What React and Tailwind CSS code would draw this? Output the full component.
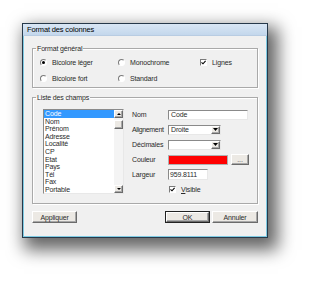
import React from "react";

const raised =
  "bg-[#ece9e4] border border-t-white border-l-white border-r-[#6b6b6b] border-b-[#6b6b6b] shadow-[inset_-1px_-1px_0_#a8a8a8]";
const sunken =
  "bg-white border border-t-[#8a8a8a] border-l-[#8a8a8a] border-r-[#e8e8e8] border-b-[#e8e8e8]";

function Radio({ checked, label }) {
  return (
    <div className="flex items-center h-[8px]">
      <div className="w-[7px] h-[7px] rounded-full border border-t-[#7a7a7a] border-l-[#7a7a7a] border-r-white border-b-white bg-white flex items-center justify-center">
        {checked && <div className="w-[3px] h-[3px] rounded-full bg-black" />}
      </div>
      <span className="ml-[5px]">{label}</span>
    </div>
  );
}

function Check({ label, underline }) {
  return (
    <div className="flex items-center h-[8px]">
      <div className="w-[7px] h-[7px] border border-t-[#7a7a7a] border-l-[#7a7a7a] border-r-white border-b-white bg-white flex items-center justify-center">
        <svg width="5" height="5" viewBox="0 0 5 5">
          <path d="M0.5 2.3 L2 3.8 L4.6 0.8" stroke="#000" strokeWidth="1.1" fill="none" />
        </svg>
      </div>
      <span className="ml-[5px]">
        {underline ? (
          <>
            <span className="underline">V</span>isible
          </>
        ) : (
          label
        )}
      </span>
    </div>
  );
}

function Select({ value }) {
  return (
    <div className={`w-[53px] h-[10px] ${sunken} flex items-center`}>
      <span className="flex-1 pl-[2px]">{value}</span>
      <div className={`w-[9px] h-[8px] ${raised} flex items-center justify-center`}>
        <svg width="5" height="3" viewBox="0 0 5 3">
          <path d="M0 0 H5 L2.5 3 Z" fill="#000" />
        </svg>
      </div>
    </div>
  );
}

const items = ["Code", "Nom", "Prénom", "Adresse", "Localité", "CP", "Etat", "Pays", "Tél", "Fax", "Portable"];

export default function App() {
  return (
    <div className="w-[312px] h-[282px] bg-white pt-[23px] pl-[22px] font-['Liberation_Sans',Arial,sans-serif] text-[7px] leading-none tracking-[-0.15px] text-[#2a2a2a]">
      <div className="w-[246px] h-[215px] border border-[#27394a] shadow-[6px_8px_16px_4px_rgba(0,0,0,0.6)] flex flex-col bg-[#f0f0f0]">
        <div className="h-[12px] shrink-0 bg-gradient-to-b from-[#d9e6f4] to-[#c3d7ec] flex items-center pl-[4px] text-[7.5px] text-black border-b border-[#b8cce2]">
          Format des colonnes
        </div>
        <div className="flex-1 flex flex-col px-[8px] border-x border-b border-[#7fcbe3]">
          <fieldset className="mt-[9px] h-[43px] border border-[#a9a9a9] shadow-[inset_1px_1px_0_#fff,1px_1px_0_#fff] px-0">
            <legend className="ml-[3px] px-[1px] leading-[7px]">Format général</legend>
            <div className="flex pl-[7px] pt-[6px]">
              <div className="w-[78px] flex flex-col gap-[8px]">
                <Radio checked label="Bicolore léger" />
                <Radio label="Bicolore fort" />
              </div>
              <div className="w-[82px] flex flex-col gap-[8px]">
                <Radio label="Monochrome" />
                <Radio label="Standard" />
              </div>
              <div className="flex flex-col">
                <Check label="Lignes" />
              </div>
            </div>
          </fieldset>
          <fieldset className="mt-[6px] h-[110px] border border-[#a9a9a9] shadow-[inset_1px_1px_0_#fff,1px_1px_0_#fff] px-0">
            <legend className="ml-[3px] px-[1px] leading-[7px]">Liste des champs</legend>
            <div className="flex pl-[10px] pt-[8px]">
              <div className={`w-[81px] h-[85px] ${sunken} flex`}>
                <div className="flex-1 flex flex-col">
                  {items.map((it, i) => (
                    <div
                      key={it}
                      className={`h-[7.6px] leading-[7.6px] pl-[1px] ${i === 0 ? "bg-[#3399ff] text-white" : ""}`}
                    >
                      {it}
                    </div>
                  ))}
                </div>
                <div className="w-[9px] flex flex-col bg-[#f4f4f4]">
                  <div className={`h-[8px] ${raised} flex items-center justify-center`}>
                    <svg width="4" height="2" viewBox="0 0 4 2">
                      <path d="M0 2 H4 L2 0 Z" fill="#000" />
                    </svg>
                  </div>
                  <div className={`mt-[2px] h-[9px] ${raised}`} />
                  <div className="flex-1" />
                  <div className={`h-[8px] ${raised} flex items-center justify-center`}>
                    <svg width="4" height="2" viewBox="0 0 4 2">
                      <path d="M0 0 H4 L2 2 Z" fill="#000" />
                    </svg>
                  </div>
                </div>
              </div>
              <div className="ml-[8px] flex flex-col gap-[4px]">
                <div className="flex items-center h-[11px]">
                  <span className="w-[36px]">Nom</span>
                  <div className={`w-[80px] h-[10px] ${sunken} flex items-center pl-[2px]`}>Code</div>
                </div>
                <div className="flex items-center h-[11px]">
                  <span className="w-[36px] whitespace-nowrap tracking-[-0.35px]">Alignement</span>
                  <Select value="Droite" />
                </div>
                <div className="flex items-center h-[11px]">
                  <span className="w-[36px]">Décimales</span>
                  <Select value="" />
                </div>
                <div className="flex items-center h-[11px]">
                  <span className="w-[36px]">Couleur</span>
                  <div className="w-[60px] h-[10px] bg-[#ff0000] border border-[#b0b0b0]" />
                  <div className={`ml-[3px] w-[18px] h-[11px] ${raised} flex items-center justify-center text-[#555]`}>...</div>
                </div>
                <div className="flex items-center h-[11px]">
                  <span className="w-[36px]">Largeur</span>
                  <div className={`w-[40px] h-[11px] ${sunken} flex items-center pl-[1px]`}>959.8111</div>
                </div>
                <div className="flex items-center h-[11px] pl-[37px]">
                  <Check underline />
                </div>
              </div>
            </div>
          </fieldset>
          <div className="mt-[7px] flex items-center">
            <div className={`w-[45px] h-[12px] ${raised} flex items-center justify-center`}>Appliquer</div>
            <div className="flex-1" />
            <div className="w-[45px] h-[12px] border border-[#222] flex">
              <div className={`flex-1 ${raised} flex items-center justify-center`}>OK</div>
            </div>
            <div className={`ml-[2px] w-[46px] h-[12px] ${raised} flex items-center justify-center`}>Annuler</div>
          </div>
        </div>
      </div>
    </div>
  );
}
